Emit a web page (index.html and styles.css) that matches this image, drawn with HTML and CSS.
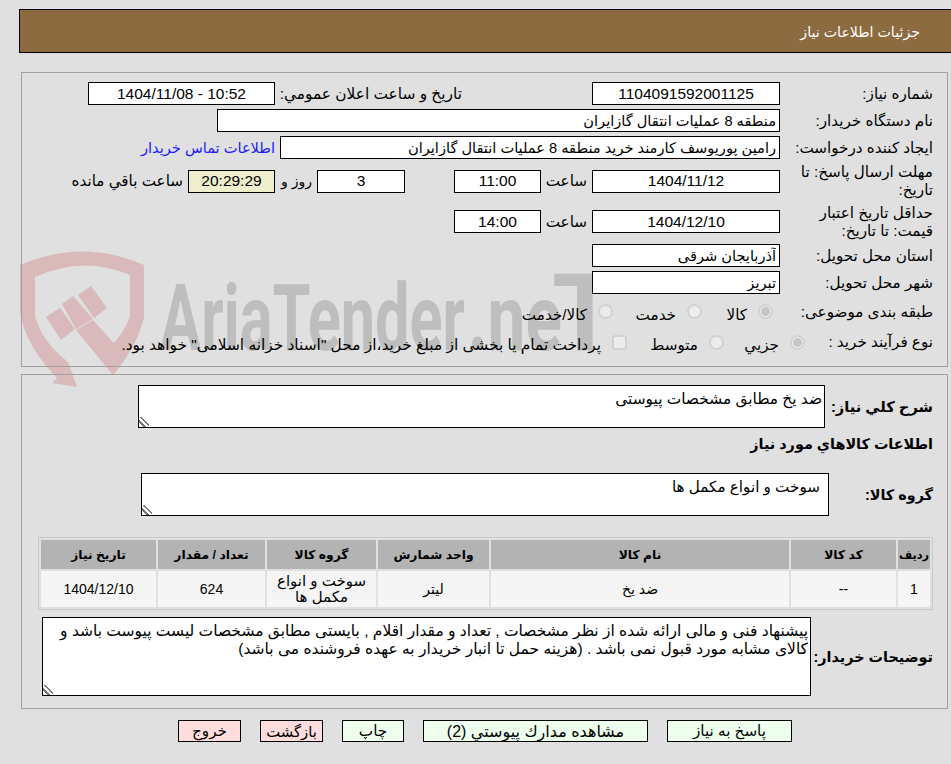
FILE: index.html
```html
<!DOCTYPE html>
<html lang="fa" dir="rtl">
<head>
    <meta charset="UTF-8">
    <meta name="viewport" content="width=device-width, initial-scale=1.0">
    <title>جزئیات اطلاعات نیاز</title>
    <link rel="stylesheet" href="styles.css">
</head>
<body>
    <!-- watermark sits behind the whole form -->
    <svg class="watermark" width="951" height="764" viewBox="0 0 951 764">
        <path class="wm-shield" d="M20 265 Q83 238 144 265 L144 318 Q136 348 113 375 L100 358 Q124 335 130 316 L130 275 Q83 255 35 277 L35 316 Q42 342 68 362 L77 387 L52 383 L57 378 Q25 345 20 312 Z"/>
        <path class="wm-shield" d="M46 317 L60 308 L75 329 L61 340 Z M62 304 L73 296 L93 319 L76 329 Z M78 295 L91 286 L107 308 L94 318 Z M76 330 L93 320 L126 357 L113 375 Z"/>
        <text class="wm-text" x="160" y="350" textLength="305" lengthAdjust="spacingAndGlyphs">AriaTender</text>
        <text class="wm-text" x="468" y="350" textLength="94" lengthAdjust="spacingAndGlyphs">.ne</text>
        <text class="wm-text wm-cap" x="552" y="350" textLength="66" lengthAdjust="spacingAndGlyphs">T</text>
    </svg>

    <div class="page-title">جزئیات اطلاعات نیاز</div>

    <div class="panel panel-main">
        <div class="row">
            <div class="label">شماره نیاز:</div>
            <input class="field field-date num" type="text" readonly value="1104091592001125">
            <div class="announce-label">تاريخ و ساعت اعلان عمومي:</div>
            <input class="field field-announce num" type="text" readonly value="1404/11/08 - 10:52" dir="ltr">
        </div>
        <div class="row">
            <div class="label">نام دستگاه خریدار:</div>
            <input class="field field-buyer" type="text" readonly value="منطقه 8 عملیات انتقال گازایران">
        </div>
        <div class="row">
            <div class="label">ایجاد کننده درخواست:</div>
            <input class="field field-creator" type="text" readonly value="رامین پوریوسف کارمند خرید منطقه 8 عملیات انتقال گازایران">
            <a class="contact-link" href="#">اطلاعات تماس خریدار</a>
        </div>
        <div class="row row-deadline">
            <div class="label">مهلت ارسال پاسخ: تا تاریخ:</div>
            <input class="field field-date num" type="text" readonly value="1404/11/12">
            <div class="time-label">ساعت</div>
            <input class="field field-time num" type="text" readonly value="11:00">
            <input class="field field-days num" type="text" readonly value="3">
            <div class="days-label">روز و</div>
            <input class="field field-clock num" type="text" readonly value="20:29:29">
            <div class="left-label">ساعت باقي مانده</div>
        </div>
        <div class="row row-validity">
            <div class="label">حداقل تاریخ اعتبار قیمت: تا تاریخ:</div>
            <input class="field field-date num" type="text" readonly value="1404/12/10">
            <div class="time-label">ساعت</div>
            <input class="field field-time num" type="text" readonly value="14:00">
        </div>
        <div class="row">
            <div class="label">استان محل تحویل:</div>
            <input class="field field-date text" type="text" readonly value="آذربایجان شرقی">
        </div>
        <div class="row">
            <div class="label">شهر محل تحویل:</div>
            <input class="field field-date text" type="text" readonly value="تبریز">
        </div>
        <div class="row row-options">
            <div class="label">طبقه بندی موضوعی:</div>
            <label class="option option-goods"><input type="radio" name="cat" checked disabled><span>کالا</span></label>
            <label class="option option-service"><input type="radio" name="cat" disabled><span>خدمت</span></label>
            <label class="option"><input type="radio" name="cat" disabled><span>کالا/خدمت</span></label>
        </div>
        <div class="row row-process">
            <div class="label">نوع فرآیند خرید :</div>
            <label class="option option-small"><input type="radio" name="proc" checked disabled><span>جزيي</span></label>
            <label class="option option-medium"><input type="radio" name="proc" disabled><span>متوسط</span></label>
            <label class="option option-treasury"><input type="checkbox" disabled><span>پرداخت تمام یا بخشی از مبلغ خرید،از محل "اسناد خزانه اسلامی" خواهد بود.</span></label>
        </div>
    </div>

    <div class="panel panel-items">
        <div class="block">
            <div class="label-bold label-summary">شرح كلي نياز:</div>
            <textarea class="area area-summary" readonly>ضد یخ مطابق مشخصات پیوستی</textarea>
        </div>
        <h3 class="items-title">اطلاعات كالاهاي مورد نياز</h3>
        <div class="block">
            <div class="label-bold label-group">گروه کالا:</div>
            <textarea class="area area-group" readonly>سوخت و انواع مکمل ها</textarea>
        </div>

        <table class="items">
            <thead>
                <tr>
                    <th class="col-row">ردیف</th>
                    <th class="col-code">کد کالا</th>
                    <th class="col-name">نام کالا</th>
                    <th class="col-unit">واحد شمارش</th>
                    <th class="col-group">گروه کالا</th>
                    <th class="col-qty">تعداد / مقدار</th>
                    <th class="col-date">تاریخ نیاز</th>
                </tr>
            </thead>
            <tbody>
                <tr>
                    <td>1</td>
                    <td>--</td>
                    <td>ضد یخ</td>
                    <td>لیتر</td>
                    <td class="cell-group">سوخت و انواع مکمل ها</td>
                    <td>624</td>
                    <td>1404/12/10</td>
                </tr>
            </tbody>
        </table>

        <div class="block">
            <div class="label-bold label-notes">توضیحات خریدار:</div>
            <textarea class="area area-notes" readonly>پیشنهاد فنی و مالی ارائه شده از نظر مشخصات , تعداد و مقدار اقلام , بایستی مطابق مشخصات لیست پیوست باشد و کالای مشابه مورد قبول نمی باشد . (هزینه حمل تا انبار خریدار به عهده فروشنده می باشد)</textarea>
        </div>
    </div>

    <div class="actions">
        <button class="btn btn-reply">پاسخ به نیاز</button>
        <button class="btn btn-docs">مشاهده مدارك پيوستي (2)</button>
        <button class="btn btn-print">چاپ</button>
        <button class="btn btn-red btn-back">بازگشت</button>
        <button class="btn btn-red btn-exit">خروج</button>
    </div>
</body>
</html>
```

FILE: styles.css
```css
body {
    margin: 0;
    background-color: #e0e0e0;
    font-family: "Liberation Sans", "DejaVu Sans", sans-serif;
    font-size: 15.2px;
    color: #000;
    position: relative;
    height: 764px;
    overflow: hidden;
}
.page-title {
    margin: 9px 0 0 19px;
    height: 44px;
    line-height: 44px;
    box-sizing: border-box;
    border: 1px solid #000;
    border-right: none;
    background-color: #8b6b3f;
    color: #fff;
    font-size: 14.2px;
    padding-right: 31px;
}
.panel {
    margin: 0 3px 0 21px;
    border: 1px solid #a0a0a0;
    box-sizing: border-box;
}
.panel-main {
    margin-top: 19px;
    height: 295px;
    padding-top: 7px;
}
.panel-items {
    margin-top: 7px;
    height: 335px;
    padding-top: 10px;
}
.row {
    display: flex;
    align-items: center;
    height: 27px;
    padding-right: 14px;
}
.row-deadline {
    height: 40px;
}
.row-validity {
    height: 41px;
}
.row-options {
    height: 31px;
}
.row-process {
    height: 30px;
}
.label {
    width: 143px;
    margin-left: 10px;
    line-height: 18px;
}
.row-process .label {
    width: 128px;
    margin-left: 0;
}
.field {
    box-sizing: border-box;
    height: 23px;
    border: 1px solid #000;
    background: #fff;
    font: inherit;
    font-size: 14.6px;
    padding: 0 3px;
    margin: 0;
    outline: none;
}
.field.num {
    font-size: 15.5px;
}
.field-date {
    width: 188px;
    text-align: center;
}
.field-date.text {
    text-align: right;
}
.field-announce {
    width: 187px;
    text-align: center;
}
.announce-label {
    width: 317px;
    padding-right: 130px;
    box-sizing: border-box;
    font-size: 15.4px;
}
.field-buyer {
    width: 563px;
}
.field-creator {
    width: 500px;
}
.contact-link {
    margin-right: 5px;
    color: #1a1aff;
    text-decoration: none;
    font-size: 14.6px;
}
.time-label {
    width: 51px;
    padding-right: 5px;
    box-sizing: border-box;
}
.field-time {
    width: 87px;
    text-align: center;
}
.field-days {
    width: 88px;
    margin-right: 49px;
    text-align: center;
}
.days-label {
    width: 42px;
    padding-right: 5px;
    box-sizing: border-box;
    font-size: 14px;
}
.field-clock {
    width: 87px;
    text-align: center;
    background-color: #eeeecc;
}
.left-label {
    padding-right: 5px;
}
.option {
    display: flex;
    align-items: center;
}
.option input {
    appearance: none;
    box-sizing: border-box;
    flex: none;
    width: 15px;
    height: 15px;
    margin: 0 0 0 11px;
    border: 2px solid #d2d2d2;
    background-color: #ececec;
}
.option input[type="radio"] {
    border-radius: 50%;
}
.option input[type="checkbox"] {
    border-radius: 3px;
}
.option input:checked {
    background: radial-gradient(circle, #c6c6c6 0 4px, #ececec 5px);
}
.option span {
    margin-top: 6px;
}
.option-goods {
    width: 71px;
    margin-right: 7px;
}
.option-service {
    width: 89px;
}
.option-small {
    width: 81px;
}
.option-medium {
    width: 97px;
}
.option-treasury {
    font-size: 15.4px;
}
.block {
    display: flex;
    align-items: center;
    padding-right: 14px;
}
.label-bold {
    font-weight: bold;
    font-size: 14.4px;
}
.label-summary {
    width: 108px;
    font-size: 14.7px;
}
.label-group {
    width: 104px;
}
.label-notes {
    width: 122px;
}
.area {
    box-sizing: border-box;
    border: 1px solid #000;
    background: #fff;
    font: inherit;
    line-height: 18px;
    padding: 4px 2px 2px;
    margin: 0;
    outline: none;
}
.area::-webkit-resizer {
    background: linear-gradient(45deg, transparent 22%, #777 22% 36%, transparent 36% 52%, #777 52% 64%, transparent 64%) left bottom / 10px 10px no-repeat;
}
.area-summary {
    width: 687px;
    height: 43px;
    font-size: 15.4px;
}
.area-group {
    width: 688px;
    height: 43px;
    padding: 4px 8px;
}
.area-notes {
    width: 769px;
    height: 79px;
    overflow: hidden;
    font-size: 15.5px;
}
.items-title {
    margin: 0;
    height: 45px;
    line-height: 32px;
    padding-right: 14px;
    font-size: 14.4px;
}
.items {
    margin: 21px 14px 7px 0;
    width: 895px;
    table-layout: fixed;
    border: 1px solid #c8c8c8;
    border-spacing: 2px;
    font-size: 14px;
}
.items th {
    background-color: #b3b3b3;
    height: 29px;
    padding: 0;
    font-size: 12.3px;
    white-space: nowrap;
}
.items td {
    background-color: #f5f5f5;
    height: 36px;
    padding: 0 2px;
    text-align: center;
    line-height: 16px;
}
.items .cell-group {
    font-size: 15px;
}
.items .col-row {
    font-size: 11.4px;
}
.col-row { width: 32px; }
.col-code { width: 105px; }
.col-name { width: 298px; }
.col-unit { width: 111px; }
.col-group { width: 109px; }
.col-qty { width: 107px; }
.col-date { width: 115px; }
.actions {
    display: flex;
    gap: 19px;
    margin: 11px 159px 0 0;
}
.btn {
    box-sizing: border-box;
    height: 22px;
    border: 1px solid #000;
    background-color: #eeffee;
    font: inherit;
    padding: 0;
    margin: 0;
}
.btn-red {
    background-color: #ffdddd;
}
.btn-reply { width: 125px; }
.btn-docs { width: 225px; font-size: 16px; }
.btn-print { width: 62px; }
.btn-back { width: 63px; font-size: 14.8px; }
.btn-exit { width: 63px; }
.watermark {
    position: absolute;
    left: 0;
    top: 0;
    z-index: -1;
    direction: ltr;
}
.wm-shield {
    fill: #d9b9b9;
}
.wm-text {
    fill: #bebebe;
    font-family: "Roboto", sans-serif;
    font-weight: 700;
    font-size: 92px;
}
.wm-cap {
    font-size: 108px;
}
```
